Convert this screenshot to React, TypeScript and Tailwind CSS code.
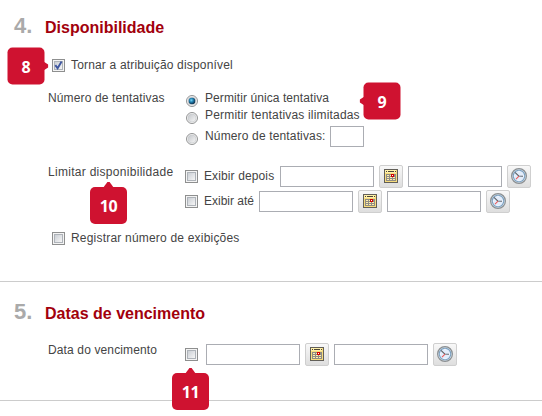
import type { ReactNode } from "react";

function Label({ children, className = "" }: { children: ReactNode; className?: string }) {
  return (
    <span className={`block shrink-0 whitespace-nowrap text-[12px] leading-[14px] text-[#444] ${className}`}>
      {children}
    </span>
  );
}

function Check({ checked = false, className = "" }: { checked?: boolean; className?: string }) {
  return (
    <span
      role="checkbox"
      aria-checked={checked}
      className={`block size-[13px] shrink-0 border border-[#8e8f8f] bg-[#f4f4f4] p-px ${className}`}
    >
      <span className="block size-[9px] border border-[#aeb3b9] bg-linear-to-br from-[#cbcfd5] to-[#f6f6f6]">
        {checked && (
          <svg viewBox="0 0 7 7" className="block size-[7px] overflow-visible">
            <path d="M0.3 3.2 L2.6 6.2 L6.6 -0.4" fill="none" stroke="#3f57a0" strokeWidth="1.9" />
          </svg>
        )}
      </span>
    </span>
  );
}

function Radio({ checked = false, className = "" }: { checked?: boolean; className?: string }) {
  return (
    <svg viewBox="0 0 12 12" role="radio" aria-checked={checked} className={`block size-3 shrink-0 ${className}`}>
      <defs>
        <linearGradient id="radioFill" x1="0" y1="0" x2="1" y2="1">
          <stop offset="0" stopColor="#c2c5c9" />
          <stop offset="1" stopColor="#f8f8f8" />
        </linearGradient>
        <radialGradient id="radioDot" cx="0.4" cy="0.38" r="0.62">
          <stop offset="0" stopColor="#79d5f4" />
          <stop offset="0.45" stopColor="#2384b4" />
          <stop offset="1" stopColor="#0b2c49" />
        </radialGradient>
      </defs>
      <circle cx="6" cy="6" r="5.5" fill="#f4f4f4" stroke="#929394" />
      <circle cx="6" cy="6" r="4" fill="url(#radioFill)" stroke="#c5c8cb" strokeWidth="0.6" />
      {checked && <circle cx="6" cy="6" r="3.3" fill="url(#radioDot)" />}
    </svg>
  );
}

function Field({ className = "w-[94px]" }: { className?: string }) {
  return <span className={`block h-[21px] shrink-0 border border-[#abadb3] bg-white ${className}`} />;
}

function IconButton({ children }: { children: ReactNode }) {
  return (
    <button className="flex h-[23px] w-6 shrink-0 items-start justify-center rounded-[2px] border border-[#cfcfcf] bg-linear-to-b from-[#f8f8f8] to-[#dedede]">
      {children}
    </button>
  );
}

function CalendarIcon() {
  return (
    <svg viewBox="0 0 14 14" shapeRendering="crispEdges" className="mt-[3px] block size-[14px]">
      <rect width="14" height="14" fill="#625f58" />
      <rect x="1" y="1" width="12" height="12" fill="#f7dc7c" />
      <rect x="1" y="1" width="11" height="3" fill="#fff0a8" />
      <path d="M2 2h1v1h-1zM4 2h6v1h-6zM11 2h1v1h-1z" fill="#4b4638" />
      <path d="M2 5h10v7h-10z" fill="#8f8c84" />
      <path d="M3 6h2v1h-2zM6 6h1v1h-1zM3 8h2v1h-2zM6 8h2v1h-2zM9 8h2v1h-2zM3 10h2v1h-2zM6 10h2v1h-2zM9 10h2v1h-2z" fill="#ffefae" />
      <rect x="7" y="5" width="3" height="3" fill="#d40000" />
      <rect x="8" y="6" width="1" height="1" fill="#ffffff" />
    </svg>
  );
}

function ClockIcon() {
  return (
    <svg viewBox="0 0 16 16" className="mt-[2px] block size-4">
      <circle cx="8" cy="8" r="7.4" fill="#d3dfe8" stroke="#8b8f92" strokeWidth="1.2" />
      <circle cx="8" cy="8" r="5.7" fill="#e3edfb" stroke="#7ba0c0" strokeWidth="1.1" />
      <path d="M8 2.8v1M8 12.2v1M2.8 8h1M12.2 8h1" stroke="#ffffff" strokeWidth="1" />
      <path d="M4 4.4 L7.7 8 L12 8.2" fill="none" stroke="#5d6267" strokeWidth="1.1" />
      <path d="M8 8.2 L5 11.2" stroke="#ec5a5a" strokeWidth="1.1" />
    </svg>
  );
}

function DateTime() {
  return (
    <div className="flex items-center gap-[5px]">
      <Field />
      <IconButton>
        <CalendarIcon />
      </IconButton>
      <Field />
      <IconButton>
        <ClockIcon />
      </IconButton>
    </div>
  );
}

function Heading({ number, children }: { number: string; children: ReactNode }) {
  return (
    <header className="flex h-[26px] items-baseline pl-[14px]">
      <span className="w-[31px] text-[22px] leading-[24px] font-bold text-[#aaa]">{number}</span>
      <h2 className="text-[16px] leading-[18px] font-bold text-[#a2000c]">{children}</h2>
    </header>
  );
}

const pointers = {
  right: "-right-[4px] top-[14px] h-[9px] w-[5px] [clip-path:polygon(0_0,100%_35%,100%_65%,0_100%)]",
  left: "-left-[4px] top-[14px] h-[9px] w-[5px] [clip-path:polygon(100%_0,0_35%,0_65%,100%_100%)]",
  top: "-top-[5px] left-[13px] h-[6px] w-[11px] [clip-path:polygon(0_100%,40%_0,60%_0,100%_100%)]",
};

function Badge({ value, pointer, className }: { value: string; pointer: keyof typeof pointers; className: string }) {
  return (
    <div
      className={`absolute flex size-[37px] items-center justify-center rounded-[5px] bg-[#cf1230] font-['Open_Sans',sans-serif] text-[16px] leading-none font-bold text-white ${className}`}
    >
      {value}
      <span className={`absolute bg-[#cf1230] ${pointers[pointer]}`} />
    </div>
  );
}

export default function App() {
  return (
    <main className="relative h-[416px] w-[542px] overflow-hidden bg-white font-['Liberation_Sans',Arial,sans-serif]">
      <section className="h-[282px] border-b border-[#ccc] pt-[14px]">
        <Heading number="4.">Disponibilidade</Heading>
        <div className="mt-[18px] flex h-[33px] items-start pl-[52px]">
          <Check checked className="mt-px" />
          <Label className="ml-[6px] tracking-[0.17px]">Tornar a atribuição disponível</Label>
        </div>
        <div className="flex h-[74px] items-start pl-[48px]">
          <Label className="w-[138px] tracking-[0.13px]">Número de tentativas</Label>
          <div>
            <div className="flex h-[17px] items-start">
              <Radio checked className="mt-[4px]" />
              <Label className="ml-[7px] tracking-[0.08px]">Permitir única tentativa</Label>
            </div>
            <div className="flex h-[18px] items-start">
              <Radio className="mt-[4px]" />
              <Label className="ml-[7px] tracking-[0.18px]">Permitir tentativas ilimitadas</Label>
            </div>
            <div className="flex h-[21px] items-start">
              <Radio className="mt-[7px]" />
              <Label className="mt-[3px] ml-[7px] w-[125px] tracking-[0.15px]">Número de tentativas:</Label>
              <Field className="w-[34px]" />
            </div>
          </div>
        </div>
        <div className="flex h-[66px] items-start pl-[48px]">
          <Label className="w-[137px] tracking-[0.29px]">Limitar disponibilidade</Label>
          <div>
            <div className="flex h-[25px] items-start">
              <Check className="mt-[5px]" />
              <Label className="mt-[4px] ml-[6px] w-[76px] tracking-[0.12px]">Exibir depois</Label>
              <DateTime />
            </div>
            <div className="flex h-[25px] items-start">
              <Check className="mt-[5px]" />
              <Label className="mt-[4px] ml-[6px] w-[55px]">Exibir até</Label>
              <DateTime />
            </div>
          </div>
        </div>
        <div className="flex items-start pl-[52px]">
          <Check className="mt-px" />
          <Label className="ml-[6px] tracking-[0.2px]">Registrar número de exibições</Label>
        </div>
      </section>
      <section className="h-[119px] border-b border-[#ccc] pt-[18px]">
        <Heading number="5.">Datas de vencimento</Heading>
        <div className="mt-[17px] flex items-start pl-[48px]">
          <Label className="w-[137px] tracking-[0.13px]">Data do vencimento</Label>
          <Check className="mt-[5px] mr-[8px]" />
          <DateTime />
        </div>
      </section>
      <Badge value="8" pointer="right" className="top-[47px] left-[7px] translate-[0.5px]" />
      <Badge value="9" pointer="left" className="top-[82px] left-[363px] translate-[0.5px]" />
      <Badge value="10" pointer="top" className="top-[187px] left-[90px] tracking-[-0.3px]" />
      <Badge value="11" pointer="top" className="top-[373px] left-[172px] tracking-[-0.3px]" />
    </main>
  );
}
